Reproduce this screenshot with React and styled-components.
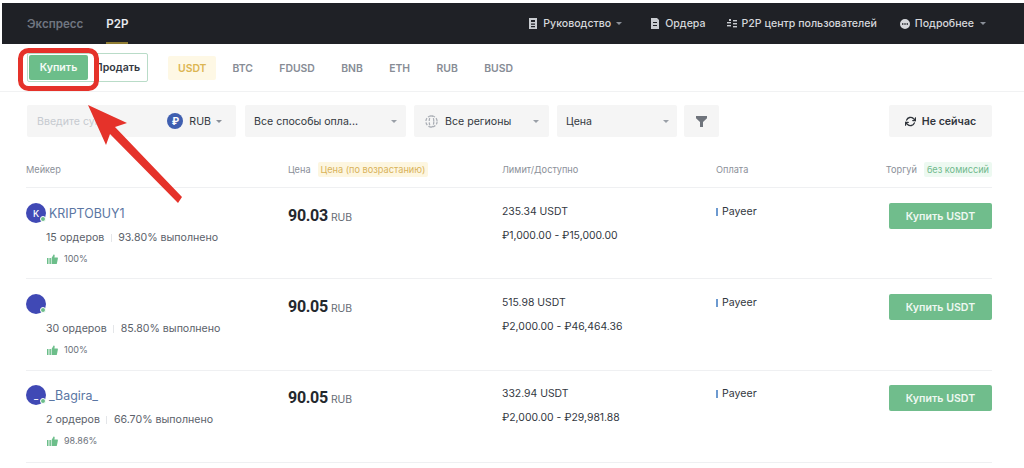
import React from "react";
import styled, { createGlobalStyle } from "styled-components";
import { FiRefreshCw } from "react-icons/fi";

const Global = createGlobalStyle`
  html, body { margin: 0; background: #fff; }
  body { font-family: Inter, "Noto Sans", sans-serif; color: #1e2329; }
`;

const Page = styled.div`
  position: relative;
  width: 1024px;
  height: 468px;
  overflow: hidden;
  padding-top: 3px;
  box-sizing: border-box;
`;

// ---- top nav ----
const Nav = styled.div`
  height: 41px;
  margin-left: 2px;
  padding: 0 38px 0 25px;
  background: #1f2126;
  display: flex;
  align-items: stretch;
  justify-content: space-between;
`;
const NavLeft = styled.div`
  display: flex;
  gap: 23px;
`;
const NavTab = styled.div`
  position: relative;
  display: flex;
  align-items: center;
  font-size: 11.6px;
  font-weight: 600;
  color: ${(p) => (p.$active ? "#eaecef" : "#6f7580")};
  ${(p) => p.$active && `
    &:after {
      content: "";
      position: absolute;
      left: 0; right: 0; bottom: 0;
      height: 2px;
      background: #8f7c32;
    }
  `}
`;
const NavRight = styled.div`
  display: flex;
  align-items: center;
  gap: 23px;
`;
const NavItem = styled.div`
  display: flex;
  align-items: center;
  gap: 5px;
  margin-left: ${(p) => p.$ml || 0}px;
  font-size: 10.6px;
  font-weight: 500;
  color: #d5d7db;
  white-space: nowrap;
`;
const Caret = styled.span`
  width: 0;
  height: 0;
  margin-left: ${(p) => p.$gap ?? 4}px;
  border-left: 3px solid transparent;
  border-right: 3px solid transparent;
  border-top: 3.5px solid ${(p) => p.$color || "#8a8f98"};
`;

// ---- asset tabs ----
const TabsBar = styled.div`
  height: 47px;
  padding: 0 0 0 27px;
  border-bottom: 1px solid #f1f2f3;
  display: flex;
  align-items: center;
`;
const SideSwitch = styled.div`
  width: 121px;
  height: 29px;
  box-sizing: border-box;
  border: 1px solid #b9dcc8;
  border-radius: 2px;
  display: flex;
  align-items: center;
  padding-left: 1px;
`;
const BuySide = styled.div`
  width: 59px;
  height: 25px;
  background: #6cbe8a;
  border-radius: 2px;
  color: #f4fbf6;
  font-size: 10.6px;
  font-weight: 600;
  display: flex;
  align-items: center;
  justify-content: center;
`;
const SellSide = styled.div`
  flex: 1;
  text-align: center;
  font-size: 10.6px;
  font-weight: 600;
  color: #33383f;
`;
const Assets = styled.div`
  display: flex;
  align-items: center;
  margin-left: 20px;
`;
const Asset = styled.div`
  height: 24px;
  padding: 1px ${(p) => (p.$active ? "10px" : "0")} 0;
  margin-right: ${(p) => (p.$active ? "16px" : "26.4px")};
  display: flex;
  align-items: center;
  box-sizing: border-box;
  border-radius: 2px;
  font-size: 10.4px;
  font-weight: 600;
  background: ${(p) => (p.$active ? "#fef8e5" : "transparent")};
  color: ${(p) => (p.$active ? "#dcb653" : "#878d96")};
`;

// ---- filters ----
const Filters = styled.div`
  margin-top: 13px;
  padding: 0 32px 0 27px;
  display: flex;
  align-items: stretch;
  height: 32px;
`;
const Field = styled.div`
  width: ${(p) => p.$w}px;
  margin-right: ${(p) => p.$mr}px;
  box-sizing: border-box;
  padding: 0 ${(p) => p.$pr || 13}px 0 ${(p) => p.$pl || 9}px;
  background: #f5f5f5;
  border-radius: 2px;
  display: flex;
  align-items: center;
  justify-content: ${(p) => (p.$center ? "center" : "space-between")};
  font-size: 10.6px;
  color: #33383f;
  white-space: nowrap;
`;
const Placeholder = styled.span`
  color: #c6cad0;
  flex: 1;
  overflow: hidden;
`;
const RubCoin = styled.span`
  width: 16px;
  height: 16px;
  margin-right: 6px;
  border-radius: 50%;
  background: #3f5fb0;
  color: #fff;
  font-size: 10px;
  font-weight: 700;
  display: flex;
  align-items: center;
  justify-content: center;
`;
const FieldLabel = styled.span`
  display: flex;
  align-items: center;
  gap: 7px;
`;
const RefreshBtn = styled.div`
  margin-left: auto;
  width: 103px;
  background: #f5f5f5;
  border-radius: 2px;
  display: flex;
  align-items: center;
  justify-content: center;
  gap: 6px;
  font-size: 10.6px;
  font-weight: 600;
  color: #2f343b;
`;

// ---- table ----
const Table = styled.div`
  margin: 0 32px 0 26px;
`;
const Row = styled.div`
  display: grid;
  grid-template-columns: 262px 214px 214px 1fr;
  height: ${(p) => p.$h}px;
  box-sizing: border-box;
  border-bottom: 1px solid #eff0f2;
  padding-top: ${(p) => p.$pt}px;
`;
const HeadRow = styled(Row)`
  margin-top: 22px;
  height: 29px;
  padding-top: 0;
  padding-bottom: 7px;
  align-items: center;
  font-size: 9.2px;
  color: #8b9099;
`;
const HeadCell = styled.div`
  display: flex;
  align-items: center;
  gap: 7px;
`;
const SplitCell = styled.div`
  display: flex;
  align-items: ${(p) => (p.$top ? "flex-start" : "center")};
  justify-content: space-between;
`;
const Tag = styled.span`
  padding: 2px 3px;
  border-radius: 2px;
  background: ${(p) => (p.$green ? "#edf9f1" : "#fdf6e0")};
  color: ${(p) => (p.$green ? "#71b98d" : "#d9b35a")};
`;
const MakerTop = styled.div`
  display: flex;
  align-items: center;
  gap: 3px;
  height: 20px;
`;
const Avatar = styled.div`
  position: relative;
  width: 20px;
  height: 20px;
  border-radius: 50%;
  background: #4049b5;
  color: #fff;
  font-size: 9px;
  font-weight: 500;
  display: flex;
  align-items: center;
  justify-content: center;
  &:after {
    content: "";
    position: absolute;
    right: 0;
    bottom: 1px;
    width: 6px;
    height: 6px;
    border-radius: 50%;
    background: #6cbe8a;
    border: 1px solid #fff;
    box-sizing: border-box;
  }
`;
const Name = styled.div`
  font-size: 12.4px;
  color: #5a76a3;
`;
const Stats = styled.div`
  margin: 8px 0 0 20px;
  display: flex;
  align-items: center;
  font-size: 10.6px;
  line-height: 13px;
  color: #5b616a;
`;
const Sep = styled.span`
  width: 1px;
  height: 8px;
  margin: 0 6.5px;
  background: #e4e6e9;
`;
const Rating = styled.div`
  margin: 9px 0 0 21px;
  display: flex;
  align-items: center;
  gap: 6px;
  font-size: 9px;
  line-height: 12px;
  color: #6b717a;
`;
const Price = styled.div`
  display: flex;
  align-items: baseline;
  gap: 3px;
  margin-top: 2px;
  font-family: Roboto, sans-serif;
  font-size: 16px;
  font-weight: 700;
  letter-spacing: -0.3px;
  line-height: 22px;
  color: #24282e;
`;
const Fiat = styled.span`
  font-family: Inter, sans-serif;
  font-size: 10.4px;
  font-weight: 400;
  letter-spacing: 0;
  color: #666c75;
`;
const LimitCell = styled.div`
  padding-top: 2px;
`;
const Limit = styled.div`
  font-size: 10.4px;
  line-height: 13px;
  margin-bottom: 11px;
  color: #33383f;
`;
const Pay = styled.div`
  display: flex;
  align-items: center;
  height: 13px;
  margin-top: 2px;
  gap: 4px;
  font-size: 10.6px;
  color: #33383f;
  &:before {
    content: "";
    width: 2px;
    height: 8px;
    background: #6d9ad0;
  }
`;
const BuyBtn = styled.div`
  width: 103px;
  height: 26px;
  background: #70bd8c;
  border-radius: 2px;
  color: #eef8f1;
  font-size: 10.6px;
  font-weight: 600;
  display: flex;
  align-items: center;
  justify-content: center;
`;

// annotation drawn over the page
const Markup = styled.svg`
  position: absolute;
  left: 0;
  top: 0;
  pointer-events: none;
`;

const Thumb = () => (
  <svg width="11" height="10" viewBox="0 0 11 10" fill="#6cbe8a">
    <rect x="0" y="4" width="1.5" height="6" />
    <rect x="2.4" y="4" width="1.5" height="6" />
    <path d="M4.6 4 6.6 0.4c.8 0 1.2.6 1.1 1.4L7.4 3.6H10.4c.4 0 .6.4.5.8L9.9 9.4c-.1.4-.3.6-.7.6H4.6z" />
  </svg>
);

const rows = [
  { letter: "K", name: "KRIPTOBUY1", orders: "15 ордеров", done: "93.80% выполнено", rate: "100%", price: "90.03", avail: "235.34 USDT", limit: "₽1,000.00 - ₽15,000.00", h: 91, pt: 15 },
  { letter: "", name: "", orders: "30 ордеров", done: "85.80% выполнено", rate: "100%", price: "90.05", avail: "515.98 USDT", limit: "₽2,000.00 - ₽46,464.36", h: 92, pt: 15 },
  { letter: "_", name: "_Bagira_", orders: "2 ордеров", done: "66.70% выполнено", rate: "98.86%", price: "90.05", avail: "332.94 USDT", limit: "₽2,000.00 - ₽29,981.88", h: 92, pt: 14 },
];

export default function App() {
  return (
    <Page>
      <Global />
      <Nav>
        <NavLeft>
          <NavTab>Экспресс</NavTab>
          <NavTab $active>P2P</NavTab>
        </NavLeft>
        <NavRight>
          <NavItem>
            <svg width="10" height="11" viewBox="0 0 10 11" fill="#c9ccd1">
              <path d="M1 0h8v11H1zM3 2v2h4V2zM3 5.5v1.2h4V5.5zM3 8v1.2h4V8z" fillRule="evenodd" />
            </svg>
            Руководство<Caret $gap={0} />
          </NavItem>
          <NavItem $ml={5}>
            <svg width="10" height="11" viewBox="0 0 10 11" fill="#c9ccd1">
              <path d="M1 0h6l2 2v9H1zM3 4v1h4V4zM3 7v1h4V7z" fillRule="evenodd" />
            </svg>
            Ордера
          </NavItem>
          <NavItem $ml={-2}>
            <svg width="10" height="10" viewBox="0 0 10 10" fill="#c9ccd1">
              <rect x="2" y="0" width="2" height="2" />
              <rect x="0" y="3" width="4" height="1.4" />
              <rect x="0" y="6" width="4" height="1.4" />
              <rect x="6" y="1" width="4" height="1.4" />
              <rect x="6" y="4" width="4" height="1.4" />
              <rect x="6" y="7" width="4" height="1.4" />
            </svg>
            P2P центр пользователей
          </NavItem>
          <NavItem>
            <svg width="10" height="10" viewBox="0 0 10 10" fill="#d5d7db">
              <path d="M5 0a5 5 0 1 1 0 10A5 5 0 0 1 5 0zM2 4.3v1.4h1.4V4.3zM4.3 4.3v1.4h1.4V4.3zM6.6 4.3v1.4H8V4.3z" fillRule="evenodd" />
            </svg>
            Подробнее<Caret $gap={1} />
          </NavItem>
        </NavRight>
      </Nav>

      <TabsBar>
        <SideSwitch>
          <BuySide>Купить</BuySide>
          <SellSide>Продать</SellSide>
        </SideSwitch>
        <Assets>
          <Asset $active>USDT</Asset>
          {["BTC", "FDUSD", "BNB", "ETH", "RUB", "BUSD"].map((a) => (
            <Asset key={a}>{a}</Asset>
          ))}
        </Assets>
      </TabsBar>

      <Filters>
        <Field $w={209} $mr={9} $pl={10} $pr={14}>
          <Placeholder>Введите сумму</Placeholder>
          <RubCoin>₽</RubCoin>
          RUB
          <Caret $gap={5} />
        </Field>
        <Field $w={161} $mr={8} $pr={9}>
          Все способы опла...
          <Caret $color="#9a9fa7" />
        </Field>
        <Field $w={135} $mr={8} $pl={11} $pr={10}>
          <FieldLabel>
            <svg width="13" height="13" viewBox="0 0 13 13" fill="none" stroke="#a9adb4" strokeWidth="1.2" strokeDasharray="3 1.4">
              <circle cx="6.5" cy="6.5" r="5.6" />
              <ellipse cx="6.5" cy="6.5" rx="2.3" ry="5.6" />
            </svg>
            Все регионы
          </FieldLabel>
          <Caret $color="#9a9fa7" />
        </Field>
        <Field $w={120} $mr={7} $pr={8}>
          Цена
          <Caret $color="#9a9fa7" />
        </Field>
        <Field $w={35} $mr={0} $pl={1} $pr={1} $center>
          <svg width="11" height="11" viewBox="0 0 11 11" fill="#6f747c">
            <path d="M0 0h11v2.2L7 6v5H4V6L0 2.2z" />
          </svg>
        </Field>
        <RefreshBtn>
          <FiRefreshCw size={11} strokeWidth={3} color="#2f343b" />
          Не сейчас
        </RefreshBtn>
      </Filters>

      <Table>
        <HeadRow $h={29} $pt={0}>
          <HeadCell>Мейкер</HeadCell>
          <HeadCell>
            Цена <Tag>Цена (по возрастанию)</Tag>
          </HeadCell>
          <HeadCell>Лимит/Доступно</HeadCell>
          <SplitCell>
            <span>Оплата</span>
            <HeadCell>
              Торгуй <Tag $green>без комиссий</Tag>
            </HeadCell>
          </SplitCell>
        </HeadRow>
        {rows.map((r) => (
          <Row key={r.avail} $h={r.h} $pt={r.pt}>
            <div>
              <MakerTop>
                <Avatar>{r.letter}</Avatar>
                <Name>{r.name}</Name>
              </MakerTop>
              <Stats>
                {r.orders}
                <Sep />
                {r.done}
              </Stats>
              <Rating>
                <Thumb />
                {r.rate}
              </Rating>
            </div>
            <div>
              <Price>
                {r.price} <Fiat>RUB</Fiat>
              </Price>
            </div>
            <LimitCell>
              <Limit>{r.avail}</Limit>
              <Limit>{r.limit}</Limit>
            </LimitCell>
            <SplitCell $top>
              <Pay>Payeer</Pay>
              <BuyBtn>Купить USDT</BuyBtn>
            </SplitCell>
          </Row>
        ))}
      </Table>

      <Markup width="1024" height="468" viewBox="0 0 1024 468">
        <rect x="20.5" y="50.5" width="76" height="38" rx="8" fill="none" stroke="#e5322a" strokeWidth="5" />
        <path d="M88 105 127 123 115 127 182 197 178 203 110 134 106 145z" fill="#e5322a" />
      </Markup>
    </Page>
  );
}
